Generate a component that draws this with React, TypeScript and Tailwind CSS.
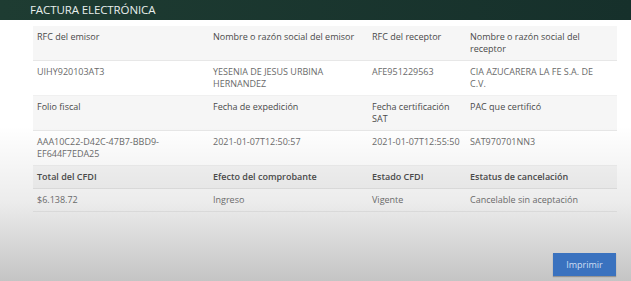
const rows: { head: string[]; values: string[]; bold?: boolean }[] = [
  {
    head: [
      "RFC del emisor",
      "Nombre o razón social del emisor",
      "RFC del receptor",
      "Nombre o razón social del receptor",
    ],
    values: [
      "UIHY920103AT3",
      "YESENIA DE JESUS URBINA HERNANDEZ",
      "AFE951229563",
      "CIA AZUCARERA LA FE S.A. DE C.V.",
    ],
  },
  {
    head: ["Folio fiscal", "Fecha de expedición", "Fecha certificación SAT", "PAC que certificó"],
    values: [
      "AAA10C22-D42C-47B7-BBD9-EF644F7EDA25",
      "2021-01-07T12:50:57",
      "2021-01-07T12:55:50",
      "SAT970701NN3",
    ],
  },
  {
    head: ["Total del CFDI", "Efecto del comprobante", "Estado CFDI", "Estatus de cancelación"],
    values: ["$6.138.72", "Ingreso", "Vigente", "Cancelable sin aceptación"],
    bold: true,
  },
];

const App = () => {
  return (
    <main
      className="w-[631px] h-[281px] overflow-hidden bg-[linear-gradient(to_bottom,#ffffff_0%,#ffffff_45%,#ececec_72%,#c4c4c4_100%)]"
      style={{ fontFamily: '"Open Sans", "Liberation Sans", sans-serif' }}
    >
      {/* TITLE BAR */}
      <header className="h-[20px] bg-[linear-gradient(to_right,#1e3c32,#16302b)] pl-[30px] flex items-center">
        <h1 className="text-[11.5px] leading-none text-[#e8eeec] tracking-[-0.1px]">FACTURA ELECTRÓNICA</h1>
      </header>

      {/* DATA TABLE */}
      <div className="ml-[33px] mt-[6px] w-[584px] text-[9px] leading-[12px]">
        {rows.map((row, i) => (
          <div key={i}>
            <div className="grid grid-cols-[176px_159px_98px_151px] bg-black/[0.035] border-b border-black/[0.06]">
              {row.head.map((h, j) => (
                <div
                  key={j}
                  className={`px-1 py-[5px] text-[#4a4a4a] ${row.bold ? "font-semibold" : ""}`}
                >
                  {h}
                </div>
              ))}
            </div>
            <div className="grid grid-cols-[176px_159px_98px_151px] border-b border-black/[0.06]">
              {row.values.map((v, j) => (
                <div
                  key={j}
                  className={`px-1 py-[5px] text-[#6a6a6a] ${j === 2 ? "whitespace-nowrap" : "pr-2"}`}
                >
                  {v}
                </div>
              ))}
            </div>
          </div>
        ))}
      </div>

      {/* ACTIONS */}
      <div className="flex justify-end pr-[15px] mt-[41px]">
        <button className="w-[63px] h-[23px] bg-[#3a72bf] text-[#cfdff3] text-[9px] shadow-[0_1px_1px_rgba(0,0,0,0.25)]">
          Imprimir
        </button>
      </div>
    </main>
  );
};

export default App;
